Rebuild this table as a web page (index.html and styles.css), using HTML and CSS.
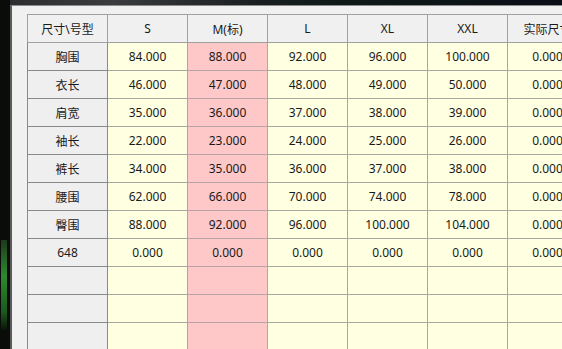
FILE: index.html
```html
<!DOCTYPE html>
<html>
<head>
<meta charset="utf-8">
<link rel="stylesheet" href="styles.css">
</head>
<body>
<div class="desk">
  <div class="strip"><div class="glow"></div></div>
  <div class="window">
    <table class="grid">
      <colgroup><col><col><col><col><col><col><col></colgroup>
      <thead>
        <tr><th>尺寸\号型</th><th>S</th><th>M(标)</th><th>L</th><th>XL</th><th>XXL</th><th>实际尺寸</th></tr>
      </thead>
      <tbody>
        <tr><th>胸围</th><td>84.000</td><td class="std">88.000</td><td>92.000</td><td>96.000</td><td>100.000</td><td>0.000</td></tr>
        <tr><th>衣长</th><td>46.000</td><td class="std">47.000</td><td>48.000</td><td>49.000</td><td>50.000</td><td>0.000</td></tr>
        <tr><th>肩宽</th><td>35.000</td><td class="std">36.000</td><td>37.000</td><td>38.000</td><td>39.000</td><td>0.000</td></tr>
        <tr><th>袖长</th><td>22.000</td><td class="std">23.000</td><td>24.000</td><td>25.000</td><td>26.000</td><td>0.000</td></tr>
        <tr><th>裤长</th><td>34.000</td><td class="std">35.000</td><td>36.000</td><td>37.000</td><td>38.000</td><td>0.000</td></tr>
        <tr><th>腰围</th><td>62.000</td><td class="std">66.000</td><td>70.000</td><td>74.000</td><td>78.000</td><td>0.000</td></tr>
        <tr><th>臀围</th><td>88.000</td><td class="std">92.000</td><td>96.000</td><td>100.000</td><td>104.000</td><td>0.000</td></tr>
        <tr><th>648</th><td>0.000</td><td class="std">0.000</td><td>0.000</td><td>0.000</td><td>0.000</td><td>0.000</td></tr>
        <tr><th></th><td></td><td class="std"></td><td></td><td></td><td></td><td></td></tr>
        <tr><th></th><td></td><td class="std"></td><td></td><td></td><td></td><td></td></tr>
        <tr><th></th><td></td><td class="std"></td><td></td><td></td><td></td><td></td></tr>
      </tbody>
    </table>
  </div>
</div>
</body>
</html>
```
FILE: styles.css
```css
html, body {
  margin: 0;
  padding: 0;
  width: 562px;
  height: 349px;
  overflow: hidden;
  background: #0d1014;
  font-family: "Noto Sans", "Noto Sans CJK SC", sans-serif;
}
.desk {
  display: flex;
  height: 349px;
  background: linear-gradient(90deg, #2a2c2e 0%, #3a3c3e 20%, #1a1f22 45%, #0f1a18 60%, #0a0e16 100%);
}
.strip {
  width: 10px;
  flex: none;
  position: relative;
  background: #0a0c0a;
}
.glow {
  position: absolute;
  left: 1px;
  top: 240px;
  width: 6px;
  height: 90px;
  background: linear-gradient(180deg, #1c3a1c, #2e8a2e 40%, #1c5a1c 80%, #0a140a);
}
.window {
  flex: 1;
  margin-top: 5px;
  border-top: 1px solid #8c8c8c;
  border-left: 2px solid #5a5a5a;
  background: #f0f0f0;
  padding: 8px 0 0 15px;
  overflow: hidden;
}
.grid {
  border-collapse: collapse;
  table-layout: fixed;
  width: 561px;
  font-size: 12px;
  color: #1a1a1a;
}
.grid col {
  width: 80px;
}
.grid th, .grid td {
  height: 27px;
  padding: 0;
  text-align: center;
  vertical-align: middle;
  white-space: nowrap;
  overflow: hidden;
  font-weight: normal;
  border: 1px solid #a8a8a0;
}
.grid thead th {
  background: #f0f0f0;
  border-color: #a0a0a0;
}
.grid tbody th {
  background: #efefef;
  border-color: #8a8a8a;
}
.grid td {
  background: #ffffe2;
}
.grid td.std {
  background: #fec8c8;
  border-color: #b8a4a4;
}
```
